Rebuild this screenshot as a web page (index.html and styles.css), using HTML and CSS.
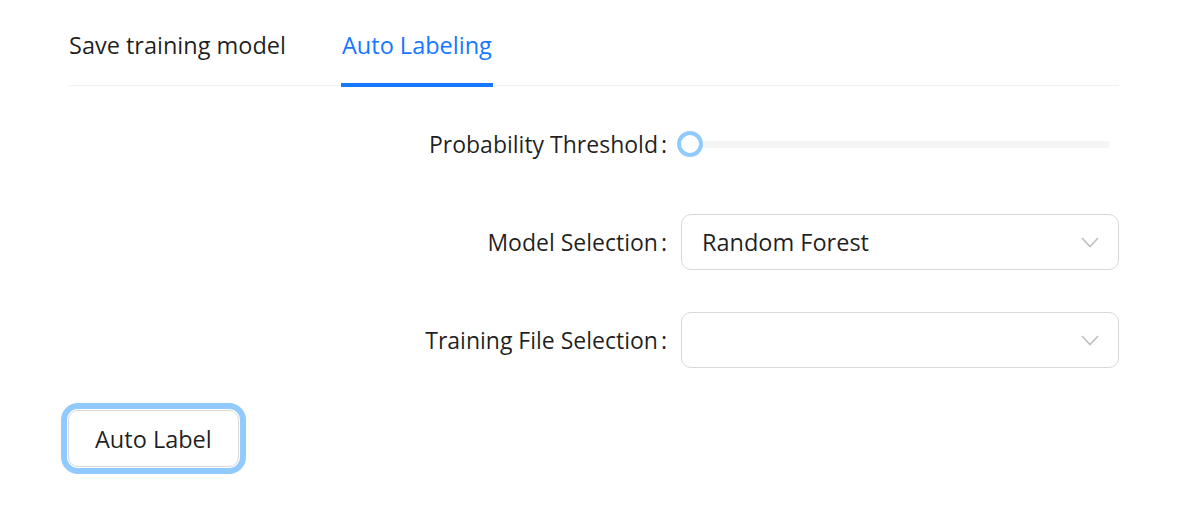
FILE: index.html
```html
<!DOCTYPE html>
<html>
<head>
<meta charset="utf-8">
<link rel="stylesheet" href="styles.css">
</head>
<body>
<div class="page">
  <div class="tabs-nav">
    <div class="tab">Save training model</div>
    <div class="tab tab-active">Auto Labeling<span class="ink"></span></div>
  </div>
  <form class="form">
    <div class="form-item">
      <div class="label"><span>Probability Threshold</span><span class="colon">:</span></div>
      <div class="control">
        <div class="slider">
          <div class="rail"></div>
          <div class="handle"></div>
        </div>
      </div>
    </div>
    <div class="form-item">
      <div class="label"><span>Model Selection</span><span class="colon">:</span></div>
      <div class="control">
        <div class="select">
          <span class="select-value">Random Forest</span>
          <svg class="arrow" width="18" height="12" viewBox="0 0 18 12"><path d="M1 2 L9 10.5 L17 2" fill="none" stroke="#bfbfbf" stroke-width="1.6"/></svg>
        </div>
      </div>
    </div>
    <div class="form-item">
      <div class="label"><span>Training File Selection</span><span class="colon">:</span></div>
      <div class="control">
        <div class="select">
          <span class="select-value"></span>
          <svg class="arrow" width="18" height="12" viewBox="0 0 18 12"><path d="M1 2 L9 10.5 L17 2" fill="none" stroke="#bfbfbf" stroke-width="1.6"/></svg>
        </div>
      </div>
    </div>
    <div class="actions">
      <button type="button" class="btn">Auto Label</button>
    </div>
  </form>
</div>
</body>
</html>
```

FILE: styles.css
```css
* { box-sizing: border-box; }
html, body { margin: 0; padding: 0; background: #fff; }
body {
  font-family: "Open Sans", "Noto Sans", sans-serif;
  font-size: 23.5px;
  color: rgba(0,0,0,0.88);
}
.page {
  width: 1050px;
  margin-left: 69px;
  padding-top: 5px;
  padding-bottom: 30px;
}
.tabs-nav {
  display: flex;
  gap: 56px;
  border-bottom: 1.5px solid #f0f0f0;
  margin-bottom: 30px;
}
.tab {
  position: relative;
  padding: 21px 0;
  line-height: 38px;
  white-space: nowrap;
}
.tab-active { color: #1677ff; }
.ink {
  position: absolute;
  left: -1px;
  right: -1px;
  bottom: -1.5px;
  height: 4px;
  background: #1677ff;
}
.form { display: flex; flex-direction: column; }
.form-item {
  display: flex;
  height: 56px;
  margin-bottom: 42px;
}
.label {
  width: 612px;
  display: flex;
  justify-content: flex-end;
  align-items: center;
  padding-right: 14px;
  white-space: nowrap;
  font-size: 23px;
}
.colon { margin-left: 3px; }
.control {
  flex: 1;
  display: flex;
  align-items: center;
}
.slider {
  position: relative;
  flex: 1;
  height: 21px;
  margin: 0 9px;
  display: flex;
  align-items: center;
}
.rail {
  flex: 1;
  height: 7px;
  border-radius: 4px;
  background: #f5f5f5;
}
.handle {
  position: absolute;
  left: -13px;
  top: 50%;
  width: 26px;
  height: 26px;
  margin-top: -13.5px;
  border-radius: 50%;
  border: 4px solid #91caff;
  background: #fff;
}
.select {
  flex: 1;
  height: 56px;
  border: 1.5px solid #d9d9d9;
  border-radius: 10px;
  display: flex;
  align-items: center;
  padding: 0 19px 0 20px;
}
.select-value { flex: 1; white-space: nowrap; }
.arrow { display: block; }
.actions { display: flex; }
.btn {
  font-family: inherit;
  font-size: inherit;
  color: rgba(0,0,0,0.88);
  height: 57px;
  padding: 0 26px;
  background: #fff;
  border: 1.5px solid #d9d9d9;
  border-radius: 10px;
  outline: 6px solid #91caff;
  outline-offset: 1px;
  margin-left: -1px;
}
```
